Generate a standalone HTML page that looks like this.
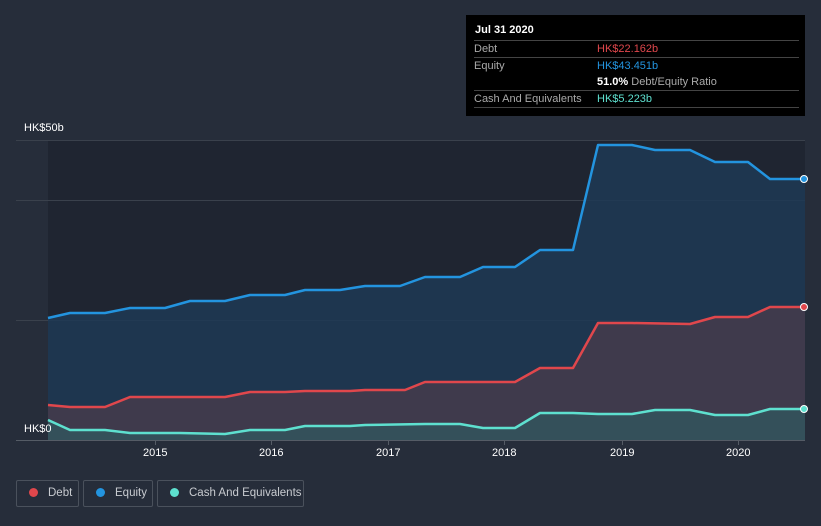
<!DOCTYPE html><html><head><style>
body{margin:0;width:821px;height:526px;background:#262d3a;font-family:"Liberation Sans",sans-serif;overflow:hidden;position:relative}
.t{position:absolute;font-size:11px;color:#fff}
.leg{position:absolute;top:480px;height:27px;border:1px solid #4a515c;border-radius:2px;color:#c8cbd0;font-size:11.5px;line-height:25px;box-sizing:border-box;white-space:nowrap;overflow:hidden}
.leg i{display:inline-block;width:9px;height:9px;border-radius:50%;margin:0 10px 0 12px;vertical-align:-1px}
#tip{position:absolute;left:466px;top:15px;width:339px;height:101px;background:#000;font-size:11px;color:#aaa}
#tip .r{position:absolute;left:8px;right:6px;border-top:1px solid #444;height:17px;line-height:17px}
#tip .v{position:absolute;left:123px}
</style></head><body>
<svg width="821" height="526" style="position:absolute;left:0;top:0">
<rect x="48" y="140" width="757" height="300" fill="#1f2531"/>
<g stroke="#3a414c" stroke-width="1"><line x1="16" y1="140.5" x2="805" y2="140.5"/><line x1="16" y1="200.5" x2="805" y2="200.5"/><line x1="16" y1="320.5" x2="805" y2="320.5"/><line x1="16" y1="440.5" x2="805" y2="440.5" stroke="#555c66"/></g>
<g stroke="#555c66"><line x1="155.5" y1="440" x2="155.5" y2="445"/><line x1="271.5" y1="440" x2="271.5" y2="445"/><line x1="388.5" y1="440" x2="388.5" y2="445"/><line x1="504.5" y1="440" x2="504.5" y2="445"/><line x1="622.5" y1="440" x2="622.5" y2="445"/><line x1="738.5" y1="440" x2="738.5" y2="445"/></g>
<path d="M48,318 L70,313 L105,313 L130,308 L165,308 L190,301 L225,301 L250,295 L285,295 L305,290 L340,290 L365,286 L400,286 L425,277 L460,277 L483,267 L515,267 L540,250 L573,250 L598,145 L632,145 L655,150 L690,150 L715,162 L748,162 L770,179 L805,179 L805,440 L48,440Z" fill="#1e3a55" opacity="0.85"/>
<path d="M48,405 L70,407 L105,407 L130,397 L225,397 L250,392 L285,392 L305,391 L350,391 L365,390 L405,390 L425,382 L515,382 L540,368 L573,368 L598,323 L632,323 L690,324 L715,317 L748,317 L770,307 L805,307 L805,440 L48,440Z" fill="#3f3a4c"/>
<path d="M48,420 L70,430 L105,430 L130,433 L180,433 L225,434 L250,430 L285,430 L305,426 L350,426 L365,425 L425,424 L460,424 L483,428 L515,428 L540,413 L573,413 L598,414 L632,414 L655,410 L690,410 L715,415 L748,415 L770,409 L805,409 L805,440 L48,440Z" fill="#34505a"/>
<g fill="none" stroke-width="2.5" stroke-linejoin="round">
<path d="M48,318 L70,313 L105,313 L130,308 L165,308 L190,301 L225,301 L250,295 L285,295 L305,290 L340,290 L365,286 L400,286 L425,277 L460,277 L483,267 L515,267 L540,250 L573,250 L598,145 L632,145 L655,150 L690,150 L715,162 L748,162 L770,179 L805,179" stroke="#2394df"/>
<path d="M48,405 L70,407 L105,407 L130,397 L225,397 L250,392 L285,392 L305,391 L350,391 L365,390 L405,390 L425,382 L515,382 L540,368 L573,368 L598,323 L632,323 L690,324 L715,317 L748,317 L770,307 L805,307" stroke="#e0474c"/>
<path d="M48,420 L70,430 L105,430 L130,433 L180,433 L225,434 L250,430 L285,430 L305,426 L350,426 L365,425 L425,424 L460,424 L483,428 L515,428 L540,413 L573,413 L598,414 L632,414 L655,410 L690,410 L715,415 L748,415 L770,409 L805,409" stroke="#5ee0cf"/>
</g>
<circle cx="804" cy="179" r="3.5" fill="#2394df" stroke="#fff" stroke-width="1"/>
<circle cx="804" cy="307" r="3.5" fill="#e0474c" stroke="#fff" stroke-width="1"/>
<circle cx="804" cy="409" r="3.5" fill="#5ee0cf" stroke="#fff" stroke-width="1"/>
</svg>
<div class="t" style="left:24px;top:122px">HK$50b</div>
<div class="t" style="left:24px;top:423px">HK$0</div>
<div class="t" style="left:143px;top:447px">2015</div>
<div class="t" style="left:259px;top:447px">2016</div>
<div class="t" style="left:376px;top:447px">2017</div>
<div class="t" style="left:492px;top:447px">2018</div>
<div class="t" style="left:610px;top:447px">2019</div>
<div class="t" style="left:726px;top:447px">2020</div>
<div class="leg" style="left:16px;width:63px"><i style="background:#e0474c"></i>Debt</div>
<div class="leg" style="left:83px;width:70px"><i style="background:#2394df"></i>Equity</div>
<div class="leg" style="left:157px;width:147px"><i style="background:#5ee0cf"></i>Cash And Equivalents</div>
<div id="tip">
<div style="position:absolute;left:9px;top:9px;color:#fff;font-weight:bold;font-size:11px">Jul 31 2020</div>
<div class="r" style="top:25px">Debt<span class="v" style="color:#e0474c">HK$22.162b</span></div>
<div class="r" style="top:42px">Equity<span class="v" style="color:#2394df">HK$43.451b</span></div>
<div style="position:absolute;left:131px;top:59px;line-height:17px"><b style="color:#fff">51.0%</b> Debt/Equity Ratio</div>
<div class="r" style="top:75px">Cash And Equivalents<span class="v" style="color:#5ee0cf">HK$5.223b</span></div>
<div class="r" style="top:92px;height:0"></div>
</div>
</body></html>
